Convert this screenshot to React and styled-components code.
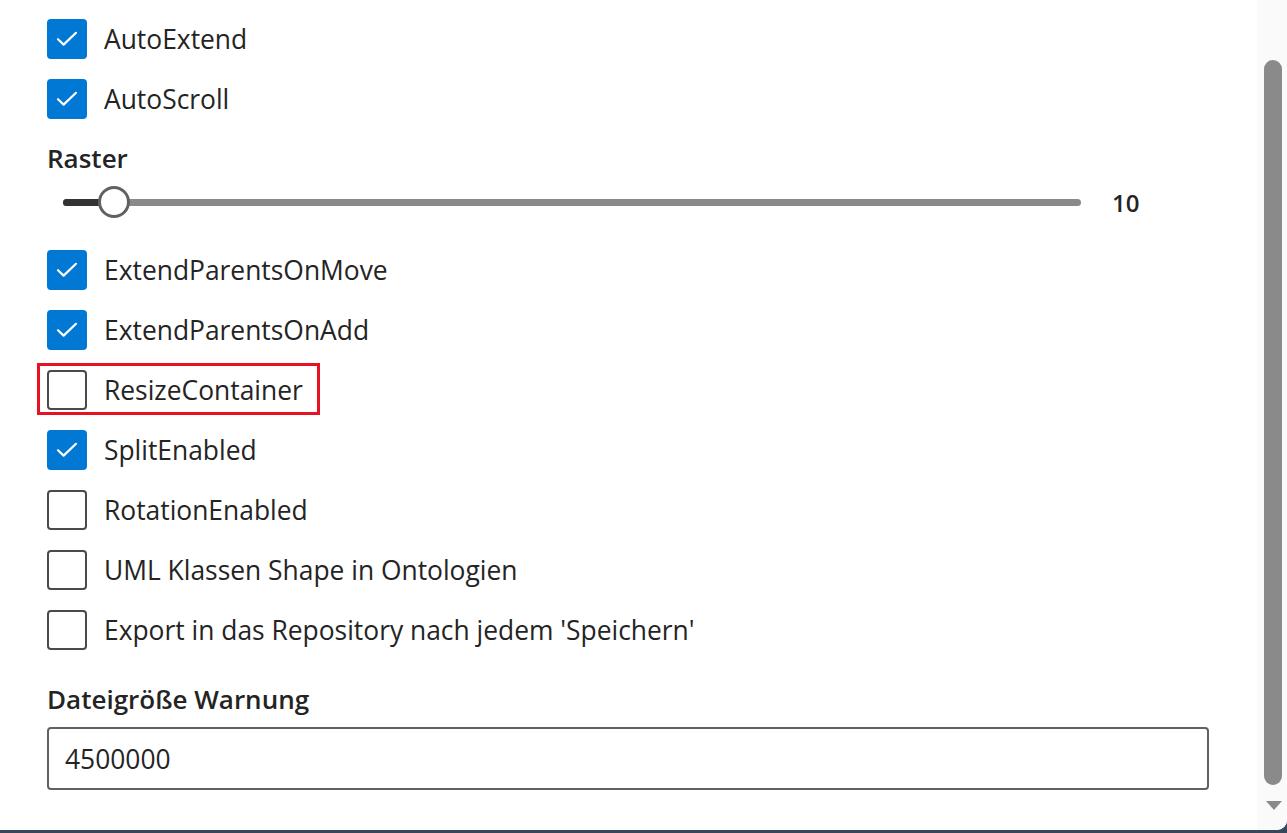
import React from "react";
import styled, { createGlobalStyle } from "styled-components";

const Global = createGlobalStyle`
  html, body { margin: 0; padding: 0; }
  body {
    background: #37475a;
    font-family: "Open Sans", "Noto Sans", sans-serif;
    color: #242424;
    overflow: hidden;
  }
`;

const Panel = styled.div`
  display: flex;
  height: 830px;
  background: #ffffff;
  border-bottom-right-radius: 10px;
  overflow: hidden;
`;

const Content = styled.div`
  flex: 1;
  padding: 9px 48px 0 47px;
  display: flex;
  flex-direction: column;
`;

const Row = styled.div`
  height: 60px;
  display: flex;
  align-items: center;
`;

const CheckLabel = styled.label`
  position: relative;
  display: inline-flex;
  align-items: center;
  gap: 17px;
  font-size: 26.4px;
  color: #242424;
  cursor: pointer;
  ${(p) =>
    p.$highlight &&
    `
    &::after {
      content: "";
      position: absolute;
      left: -10px;
      right: -17px;
      top: -7px;
      bottom: -5px;
      border: 3px solid #e81123;
      pointer-events: none;
    }
  `}
`;

const Box = styled.span`
  width: 40px;
  height: 40px;
  box-sizing: border-box;
  border-radius: 4px;
  display: flex;
  align-items: center;
  justify-content: center;
  background: ${(p) => (p.$checked ? "#0078d4" : "#ffffff")};
  border: ${(p) => (p.$checked ? "none" : "2px solid #4a4a4a")};
`;

const SectionLabel = styled.div`
  font-size: 26px;
  font-weight: 600;
  color: #242424;
  line-height: 32px;
  margin-top: ${(p) => p.$top || 0}px;
`;

const SliderRow = styled.div`
  display: flex;
  align-items: center;
  height: 40px;
  margin-top: 8px;
  margin-bottom: 18px;
  padding-left: 16px;
`;

const Track = styled.div`
  position: relative;
  width: 1018px;
  height: 7px;
  border-radius: 4px;
  background: #8a8a8a;
`;

const Fill = styled.div`
  height: 100%;
  border-radius: 4px 0 0 4px;
  background: #333333;
`;

const Thumb = styled.div`
  position: absolute;
  top: 50%;
  width: 32px;
  height: 32px;
  box-sizing: border-box;
  border-radius: 50%;
  background: #ffffff;
  border: 3px solid #616161;
  transform: translate(-50%, -50%);
`;

const Value = styled.div`
  margin-left: 31px;
  font-size: 24px;
  font-weight: 600;
  color: #242424;
`;

const Input = styled.div`
  margin-top: 12px;
  height: 63px;
  box-sizing: border-box;
  border: 2px solid #616161;
  border-radius: 4px;
  display: flex;
  align-items: center;
  padding-left: 16px;
  font-size: 26.4px;
  color: #242424;
`;

const ScrollTrack = styled.div`
  width: 30px;
  background: #fafafa;
  display: flex;
  flex-direction: column;
  align-items: center;
`;

const ScrollThumb = styled.div`
  margin-top: 60px;
  width: 18px;
  height: 725px;
  border-radius: 9px;
  background: #8a8a8a;
  margin-left: 2px;
`;

const ArrowDown = styled.div`
  margin-top: 16px;
  margin-left: 3px;
  width: 0;
  height: 0;
  border-left: 8px solid transparent;
  border-right: 8px solid transparent;
  border-top: 9px solid #8a8a8a;
`;

const Check = () => (
  <svg width="22" height="16" viewBox="0 0 22 16" fill="none">
    <path d="M2 8.2 L7.6 13.6 L20 1.8" stroke="#ffffff" strokeWidth="2.2" strokeLinecap="round" strokeLinejoin="round" />
  </svg>
);

const CheckItem = ({ label, checked, highlight }) => (
  <Row>
    <CheckLabel $highlight={highlight}>
      <Box $checked={checked}>{checked && <Check />}</Box>
      <span>{label}</span>
    </CheckLabel>
  </Row>
);

export default function App() {
  const value = 10;
  const pct = 5;
  return (
    <>
      <Global />
      <Panel>
        <Content>
          <CheckItem label="AutoExtend" checked />
          <CheckItem label="AutoScroll" checked />
          <SectionLabel $top={13}>Raster</SectionLabel>
          <SliderRow>
            <Track>
              <Fill style={{ width: `${pct}%` }} />
              <Thumb style={{ left: `${pct}%` }} />
            </Track>
            <Value>{value}</Value>
          </SliderRow>
          <CheckItem label="ExtendParentsOnMove" checked />
          <CheckItem label="ExtendParentsOnAdd" checked />
          <CheckItem label="ResizeContainer" highlight />
          <CheckItem label="SplitEnabled" checked />
          <CheckItem label="RotationEnabled" />
          <CheckItem label="UML Klassen Shape in Ontologien" />
          <CheckItem label="Export in das Repository nach jedem 'Speichern'" />
          <SectionLabel $top={23}>Dateigröße Warnung</SectionLabel>
          <Input>4500000</Input>
        </Content>
        <ScrollTrack>
          <ScrollThumb />
          <ArrowDown />
        </ScrollTrack>
      </Panel>
    </>
  );
}
